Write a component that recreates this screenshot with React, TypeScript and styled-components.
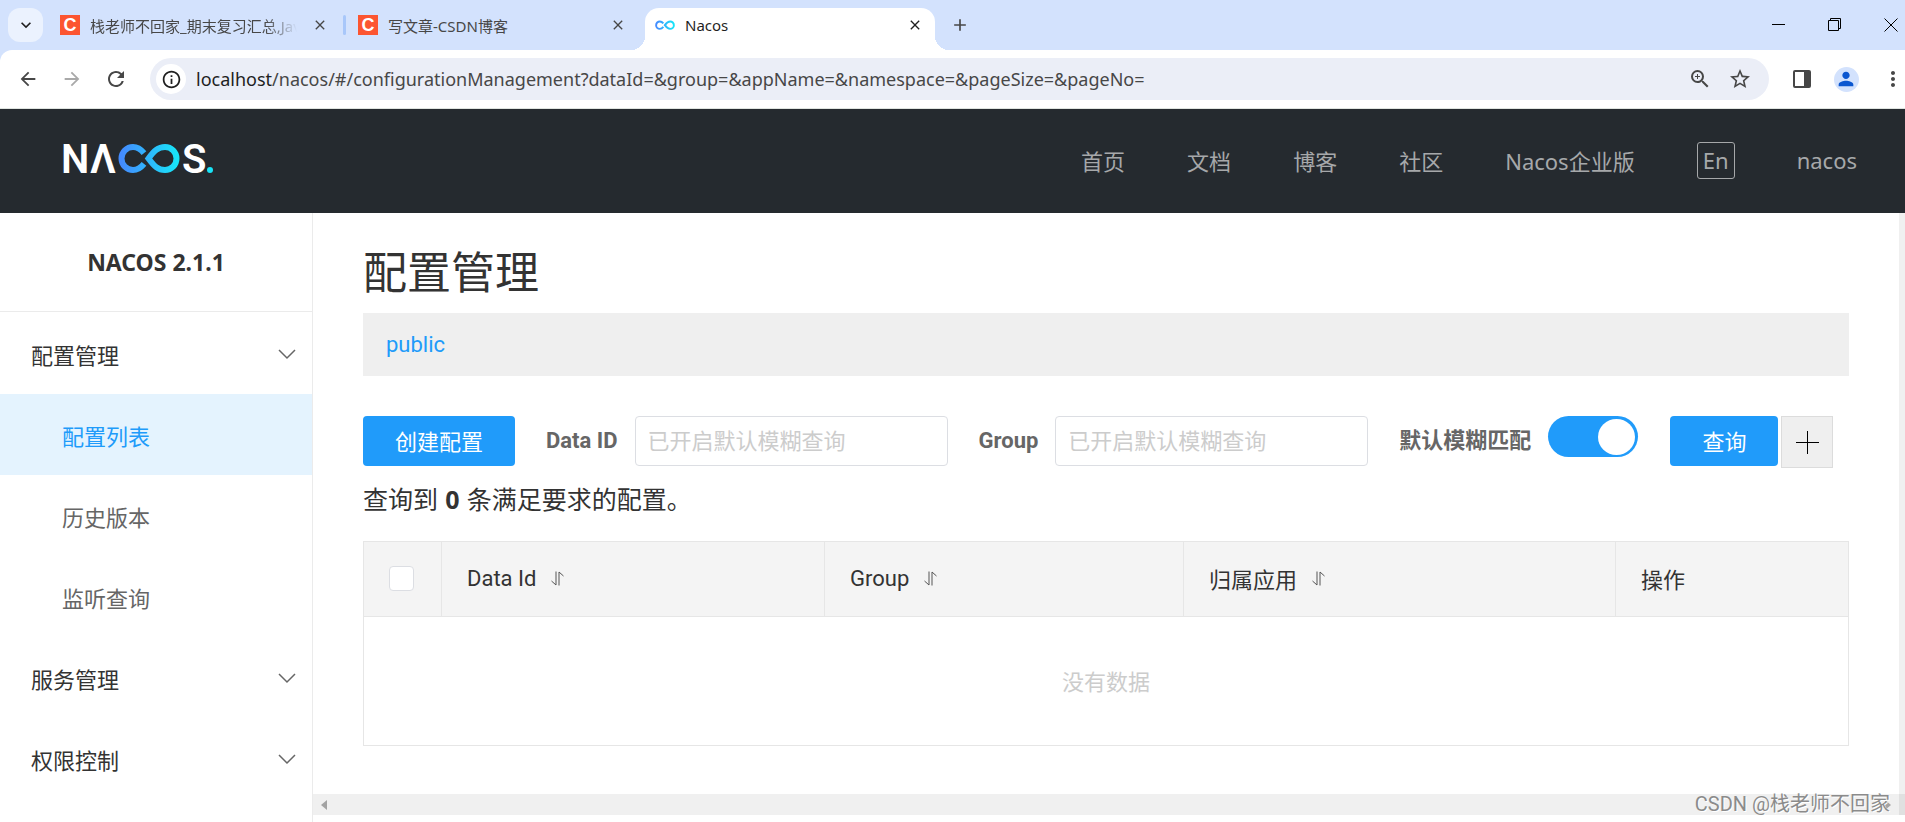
import React from 'react';
import styled, { createGlobalStyle } from 'styled-components';
import {
  MdAdd,
  MdArrowBack,
  MdArrowForward,
  MdClose,
  MdInfoOutline,
  MdKeyboardArrowDown,
  MdMoreVert,
  MdPerson,
  MdRefresh,
  MdStarOutline,
  MdZoomIn,
} from 'react-icons/md';

const uiFont = '"Noto Sans", "Noto Sans CJK SC", sans-serif';
const consoleFont = 'Roboto, "Noto Sans CJK SC", sans-serif';
const blue = '#209bfa';

const GlobalStyle = createGlobalStyle`
  *, *::before, *::after { box-sizing: border-box; }
  body { margin: 0; background: #fff; color: #333; font-family: ${consoleFont}; font-size: 22px; }
  button, input { font: inherit; color: inherit; margin: 0; }
  button { border: 0; padding: 0; background: none; cursor: pointer; }
  a { text-decoration: none; color: inherit; }
`;

const Page = styled.div`
  display: flex;
  flex-direction: column;
  min-height: 100vh;
`;

/* ---------- Browser tabs ---------- */

const TabStrip = styled.div`
  display: flex;
  align-items: stretch;
  height: 50px;
  padding-left: 8px;
  background: #d3e2fd;
  font-family: ${uiFont};
  font-size: 15px;
`;

const TabSearch = styled.button`
  display: grid;
  place-items: center;
  align-self: center;
  width: 35px;
  height: 34px;
  margin-right: 5px;
  border-radius: 12px;
  background: #ebf2fe;
  color: #1f1f1f;
`;

const Tab = styled.div<{ $active?: boolean }>`
  position: relative;
  display: flex;
  align-items: center;
  gap: 10px;
  width: ${(p) => (p.$active ? 290 : 295)}px;
  margin-top: ${(p) => (p.$active ? 8 : 0)}px;
  margin-left: ${(p) => (p.$active ? 4 : 0)}px;
  padding: 0 ${(p) => (p.$active ? 7 : 10)}px 0 ${(p) => (p.$active ? 10 : 12)}px;
  padding-bottom: ${(p) => (p.$active ? 8 : 0)}px;
  background: ${(p) => (p.$active ? '#fff' : 'transparent')};
  border-radius: 14px 14px 0 0;
  color: ${(p) => (p.$active ? '#1f1f1f' : '#474747')};

  &::before,
  &::after {
    content: ${(p) => (p.$active ? '""' : 'none')};
    position: absolute;
    bottom: 0;
    width: 14px;
    height: 14px;
  }
  &::before {
    right: 100%;
    background: radial-gradient(circle at 0 0, transparent 14px, #fff 14px);
  }
  &::after {
    left: 100%;
    background: radial-gradient(circle at 100% 0, transparent 14px, #fff 14px);
  }
`;

const TabTitle = styled.span<{ $fade?: boolean }>`
  flex: 1;
  min-width: 0;
  white-space: nowrap;
  ${(p) => p.$fade && 'mask-image: linear-gradient(to right, #000 85%, transparent);'}
`;

const TabDivider = styled.span`
  align-self: center;
  width: 3px;
  height: 20px;
  border-radius: 2px;
  background: #a8c7fa;
`;

const CsdnBadge = styled.span`
  display: grid;
  place-items: center;
  width: 20px;
  height: 20px;
  background: #fc5531;
  color: #fff;
  font: 700 18px/20px "Liberation Sans", sans-serif;
`;

const IconButton = styled.button<{ $size?: number; $color?: string }>`
  display: grid;
  place-items: center;
  flex: none;
  width: ${(p) => p.$size ?? 44}px;
  height: ${(p) => p.$size ?? 44}px;
  color: ${(p) => p.$color ?? '#474747'};
`;

const NewTab = styled(IconButton)`
  align-self: center;
  margin-left: 3px;
`;

const WindowControls = styled.div`
  display: flex;
  align-items: center;
  gap: 12px;
  margin-left: auto;
  margin-right: -8px;
  overflow: hidden;
`;

/* ---------- Address bar ---------- */

const ToolbarBack = styled.div`
  background: #d3e2fd;
`;

const Toolbar = styled.div`
  display: flex;
  align-items: center;
  height: 59px;
  padding-left: 6px;
  background: #fff;
  border-bottom: 1px solid #dfe4e0;
  border-radius: 12px 0 0 0;
`;

const AddressBar = styled.div`
  display: flex;
  align-items: center;
  flex: 1;
  height: 42px;
  margin: 0 11px 0 12px;
  padding: 0 9px 0 6px;
  border-radius: 21px;
  background: #ebeef7;
`;

const SiteInfo = styled(IconButton)`
  border-radius: 50%;
  background: #fff;
`;

const Url = styled.div`
  flex: 1;
  margin-left: 10px;
  color: #474747;
  font-family: ${uiFont};
  font-size: 18px;
  white-space: nowrap;

  b {
    color: #1f1f1f;
    font-weight: 400;
  }
`;

const Avatar = styled.span`
  display: grid;
  place-items: center;
  width: 25px;
  height: 25px;
  border-radius: 50%;
  background: #d3e2fd;
  color: #0b57d0;
`;

const MenuButton = styled(IconButton)`
  margin-left: 13px;
`;

/* ---------- Console header ---------- */

const Header = styled.header`
  display: flex;
  align-items: center;
  justify-content: space-between;
  height: 104px;
  padding: 0 48px 2px 60px;
  background: #252a2f;
`;

const Nav = styled.nav`
  display: flex;
  align-items: center;
  gap: 62px;
  color: #a6a8aa;
  font-family: ${uiFont};
  font-size: 22px;
`;

const LangButton = styled.button`
  width: 38px;
  height: 37px;
  border: 1px solid #a6a8aa;
  border-radius: 3px;
  line-height: 32px;
`;

/* ---------- Sidebar ---------- */

const Body = styled.div`
  display: flex;
  flex: 1;
`;

const Sidebar = styled.aside`
  flex: none;
  width: 313px;
  border-right: 1px solid #ebebeb;
`;

const Version = styled.h1`
  display: grid;
  place-items: center;
  height: 99px;
  margin: 0;
  border-bottom: 1px solid #ebebeb;
  font: 700 23px "Noto Sans", sans-serif;
`;

const MenuGroup = styled.button`
  display: flex;
  align-items: center;
  justify-content: space-between;
  width: 100%;
  height: 81px;
  padding: 0 16px 0 31px;
`;

const MenuLink = styled.a<{ $selected?: boolean }>`
  display: flex;
  align-items: center;
  height: 81px;
  padding-left: 62px;
  color: ${(p) => (p.$selected ? blue : '#666')};
  background: ${(p) => (p.$selected ? '#e4f3fe' : 'transparent')};
`;

const Menu = styled.nav`
  padding-top: 1px;
`;

/* ---------- Main panel ---------- */

const MainColumn = styled.div`
  display: flex;
  flex-direction: column;
  flex: 1;
  min-width: 0;
  padding-bottom: 7px;
`;

const MainRow = styled.div`
  display: flex;
  flex: 1;
`;

const Main = styled.main`
  flex: 1;
  min-width: 0;
  padding: 29px 50px 46px;
`;

const VerticalTrack = styled.div`
  width: 6px;
  background: #f0f0f0;
`;

const HorizontalTrack = styled.div`
  position: relative;
  display: flex;
  align-items: center;
  justify-content: space-between;
  height: 21px;
  padding: 0 14px 0 8px;
  background: linear-gradient(to left, #e0e0e0 6px, #f0f0f0 6px);
`;

const Watermark = styled.span`
  position: absolute;
  right: 15px;
  top: -4px;
  color: #8b8b8b;
  font: 20px/28px ${consoleFont};
  text-shadow: 1px 1px 0 #fff;
  white-space: nowrap;
`;

const Title = styled.h2`
  margin: 0 0 7px;
  font-size: 44px;
  font-weight: 400;
  line-height: 64px;
`;

const Namespaces = styled.div`
  display: flex;
  align-items: center;
  height: 63px;
  padding: 0 23px;
  background: #efefef;
  color: ${blue};
`;

const SearchForm = styled.form`
  display: flex;
  align-items: flex-start;
  margin-top: 40px;
`;

const PrimaryButton = styled.button`
  height: 50px;
  padding: 0 32px 2px;
  border-radius: 4px;
  background: ${blue};
  color: #fff;
  white-space: nowrap;
`;

const Field = styled.div`
  display: flex;
  align-items: flex-start;
  margin-left: 31px;
`;

const FieldLabel = styled.label`
  margin-right: 17px;
  color: #666;
  font-weight: 700;
  line-height: 50px;
  white-space: nowrap;
`;

const TextInput = styled.input`
  width: 313px;
  height: 50px;
  padding: 0 12px;
  border: 1px solid #dcdee3;
  border-radius: 4px;
  background: #fff;

  &::placeholder {
    color: #ccc;
    opacity: 1;
  }
`;

const Switch = styled.input`
  appearance: none;
  display: flex;
  align-items: center;
  justify-content: flex-end;
  width: 90px;
  height: 41px;
  padding: 0 3px;
  border-radius: 21px;
  background: ${blue};

  &::before {
    content: '';
    width: 37px;
    height: 36px;
    border-radius: 50%;
    background: #fff;
  }
`;

const FormActions = styled.div`
  display: flex;
  gap: 3px;
  margin-left: 32px;
`;

const MoreButton = styled.button`
  display: grid;
  place-items: center;
  width: 52px;
  height: 52px;
  border: 1px solid #dcdcdc;
  background: #efefef;
`;

const Summary = styled.p`
  margin: 13px 0 22px;
  font-size: 25px;
  line-height: 36px;

  strong {
    margin: 0 1px;
    font-family: "Noto Sans", sans-serif;
  }
`;

const Table = styled.table`
  width: 100%;
  table-layout: fixed;
  border-collapse: collapse;
  border: 1px solid #e6e6e6;
`;

const HeadCell = styled.th<{ $width?: number }>`
  width: ${(p) => (p.$width ? `${p.$width}px` : 'auto')};
  height: 75px;
  padding: 0 25px 2px;
  border: 1px solid #e6e6e6;
  background: #f4f4f4;
  font-weight: 400;
  text-align: left;
`;

const HeadContent = styled.span`
  display: flex;
  align-items: center;
  gap: 15px;
`;

const EmptyCell = styled.td`
  height: 129px;
  padding: 0 0 2px;
  color: #ccc;
  text-align: center;
`;

const Checkbox = styled.input`
  appearance: none;
  display: block;
  width: 25px;
  height: 25px;
  border: 1px solid #dcdee3;
  border-radius: 4px;
  background: #fff;
`;

/* ---------- Drawings ---------- */

const InfinityLoop = ({ id }: { id: string }) => (
  <>
    <defs>
      <linearGradient id={id} x1="0" x2="1" y1="0" y2="0">
        <stop offset="0" stopColor="#448bff" />
        <stop offset="1" stopColor="#18e4f8" />
      </linearGradient>
    </defs>
    <path
      d="M26 9.200 C23 5.500 19.500 3 15 3 A11.500 11.500 0 1 0 15 26 C19.500 26 23 23.500 26 19.800 M30.500 14.500 C36 7 40 3 47 3 A11.500 11.500 0 1 1 47 26 C40 26 36 22 30.500 14.500 Z"
      fill="none"
      stroke={`url(#${id})`}
      strokeWidth="6"
    />
  </>
);

const Logo = () => (
  <svg width="154" height="52" viewBox="0 0 154 52" role="img" aria-label="NACOS">
    <g fill="#fff" fontFamily="Roboto, sans-serif" fontWeight="600" fontSize="40">
      <text x="1" y="39">N</text>
      <text x="30" y="39">Λ</text>
      <text x="122" y="39">S</text>
    </g>
    <g transform="translate(58 10)">
      <InfinityLoop id="logoLoop" />
    </g>
    <circle cx="150" cy="36" r="3" fill="#18e4f8" />
  </svg>
);

const NacosFavicon = () => (
  <svg width="20" height="20" viewBox="0 -17 62 62" aria-hidden="true">
    <InfinityLoop id="faviconLoop" />
  </svg>
);

const Chevron = () => (
  <svg width="18" height="12" viewBox="0 0 18 12" fill="none" stroke="#666" strokeWidth="1.500" aria-hidden="true">
    <path d="M1 2l8 8 8-8" />
  </svg>
);

const SortIcon = () => (
  <svg width="13" height="15" viewBox="0 0 13 15" fill="none" stroke="#555" strokeWidth="1" aria-hidden="true">
    <path d="M5 0.500v13.500L0.500 10M8 14.500V1L12.500 5" />
  </svg>
);

const SidePanelIcon = () => (
  <svg width="20" height="20" viewBox="0 0 20 20" aria-hidden="true">
    <rect x="2" y="2" width="16" height="16" rx="1" fill="none" stroke="#474747" strokeWidth="2" />
    <path d="M12 2h6v16h-6z" fill="#474747" />
  </svg>
);

const PlusIcon = () => (
  <svg width="24" height="24" viewBox="0 0 24 24" stroke="#000" aria-hidden="true">
    <path d="M12.500 1v23M1 12.500h23" />
  </svg>
);

const MinimizeIcon = () => (
  <svg width="14" height="14" viewBox="0 0 14 14" stroke="#000" aria-hidden="true">
    <path d="M0 6.500h13" />
  </svg>
);

const RestoreIcon = () => (
  <svg width="14" height="14" viewBox="0 0 14 14" fill="none" stroke="#000" aria-hidden="true">
    <path d="M0.500 2.500h10v10h-10zM2.500 2.500v-2h10v10h-2" />
  </svg>
);

const CloseWindowIcon = () => (
  <svg width="14" height="14" viewBox="0 0 14 14" stroke="#000" aria-hidden="true">
    <path d="M0.500 0.500l13 13M13.500 0.500l-13 13" />
  </svg>
);

const ScrollArrow = ({ right }: { right?: boolean }) => (
  <svg width="6" height="10" viewBox="0 0 6 10" fill="#a3a3a3" aria-hidden="true">
    <path d={right ? 'M0 0l6 5-6 5z' : 'M6 0L0 5l6 5z'} />
  </svg>
);

const navLinks = ['首页', '文档', '博客', '社区', 'Nacos企业版'];

const sortableColumns = [
  { label: 'Data Id', width: 383 },
  { label: 'Group', width: 359 },
  { label: '归属应用', width: 432 },
];

export default function App() {
  return (
    <Page>
      <GlobalStyle />
      <TabStrip>
        <TabSearch aria-label="Search tabs"><MdKeyboardArrowDown size={20} /></TabSearch>
        <Tab>
          <CsdnBadge>C</CsdnBadge>
          <TabTitle $fade>栈老师不回家_期末复习汇总,Jav</TabTitle>
          <IconButton $size={26} aria-label="Close tab"><MdClose size={16} /></IconButton>
        </Tab>
        <TabDivider />
        <Tab>
          <CsdnBadge>C</CsdnBadge>
          <TabTitle>写文章-CSDN博客</TabTitle>
          <IconButton $size={26} aria-label="Close tab"><MdClose size={16} /></IconButton>
        </Tab>
        <Tab $active>
          <NacosFavicon />
          <TabTitle>Nacos</TabTitle>
          <IconButton $size={26} $color="#1f1f1f" aria-label="Close tab"><MdClose size={16} /></IconButton>
        </Tab>
        <NewTab aria-label="New tab"><MdAdd size={20} /></NewTab>
        <WindowControls>
          <IconButton aria-label="Minimize"><MinimizeIcon /></IconButton>
          <IconButton aria-label="Restore"><RestoreIcon /></IconButton>
          <IconButton aria-label="Close"><CloseWindowIcon /></IconButton>
        </WindowControls>
      </TabStrip>

      <ToolbarBack>
        <Toolbar>
          <IconButton aria-label="Back"><MdArrowBack size={22} /></IconButton>
          <IconButton $color="#a9a9a9" aria-label="Forward"><MdArrowForward size={22} /></IconButton>
          <IconButton aria-label="Reload"><MdRefresh size={24} /></IconButton>
          <AddressBar>
            <SiteInfo $size={30} $color="#1f1f1f" aria-label="Site information"><MdInfoOutline size={21} /></SiteInfo>
            <Url>
              <b>localhost</b>/nacos/#/configurationManagement?dataId=&amp;group=&amp;appName=&amp;namespace=&amp;pageSize=&amp;pageNo=
            </Url>
            <IconButton $size={40} aria-label="Zoom"><MdZoomIn size={24} /></IconButton>
            <IconButton $size={40} aria-label="Bookmark"><MdStarOutline size={24} /></IconButton>
          </AddressBar>
          <IconButton aria-label="Side panel"><SidePanelIcon /></IconButton>
          <IconButton aria-label="Profile"><Avatar><MdPerson size={22} /></Avatar></IconButton>
          <MenuButton $size={24} aria-label="Menu"><MdMoreVert size={24} /></MenuButton>
        </Toolbar>
      </ToolbarBack>

      <Header>
        <Logo />
        <Nav>
          {navLinks.map((label) => (
            <a key={label} href="#">{label}</a>
          ))}
          <LangButton>En</LangButton>
          <a href="#">nacos</a>
        </Nav>
      </Header>

      <Body>
        <Sidebar>
          <Version>NACOS 2.1.1</Version>
          <Menu>
            <MenuGroup>配置管理<Chevron /></MenuGroup>
            <MenuLink href="#" $selected>配置列表</MenuLink>
            <MenuLink href="#">历史版本</MenuLink>
            <MenuLink href="#">监听查询</MenuLink>
            <MenuGroup>服务管理<Chevron /></MenuGroup>
            <MenuGroup>权限控制<Chevron /></MenuGroup>
          </Menu>
        </Sidebar>

        <MainColumn>
          <MainRow>
            <Main>
              <Title>配置管理</Title>
              <Namespaces><a href="#">public</a></Namespaces>
              <SearchForm onSubmit={(e) => e.preventDefault()}>
                <PrimaryButton type="button">创建配置</PrimaryButton>
                <Field>
                  <FieldLabel htmlFor="dataId">Data ID</FieldLabel>
                  <TextInput id="dataId" placeholder="已开启默认模糊查询" />
                </Field>
                <Field>
                  <FieldLabel htmlFor="group">Group</FieldLabel>
                  <TextInput id="group" placeholder="已开启默认模糊查询" />
                </Field>
                <Field>
                  <FieldLabel htmlFor="fuzzy">默认模糊匹配</FieldLabel>
                  <Switch id="fuzzy" type="checkbox" role="switch" defaultChecked />
                </Field>
                <FormActions>
                  <PrimaryButton type="submit">查询</PrimaryButton>
                  <MoreButton type="button" aria-label="More filters"><PlusIcon /></MoreButton>
                </FormActions>
              </SearchForm>
              <Summary>查询到 <strong>0</strong> 条满足要求的配置。</Summary>
              <Table>
                <thead>
                  <tr>
                    <HeadCell $width={78}><Checkbox type="checkbox" aria-label="Select all" /></HeadCell>
                    {sortableColumns.map((c) => (
                      <HeadCell key={c.label} $width={c.width}>
                        <HeadContent>{c.label}<SortIcon /></HeadContent>
                      </HeadCell>
                    ))}
                    <HeadCell>操作</HeadCell>
                  </tr>
                </thead>
                <tbody>
                  <tr><EmptyCell colSpan={5}>没有数据</EmptyCell></tr>
                </tbody>
              </Table>
            </Main>
            <VerticalTrack />
          </MainRow>
          <HorizontalTrack>
            <ScrollArrow />
            <ScrollArrow right />
            <Watermark>CSDN @栈老师不回家</Watermark>
          </HorizontalTrack>
        </MainColumn>
      </Body>
    </Page>
  );
}
